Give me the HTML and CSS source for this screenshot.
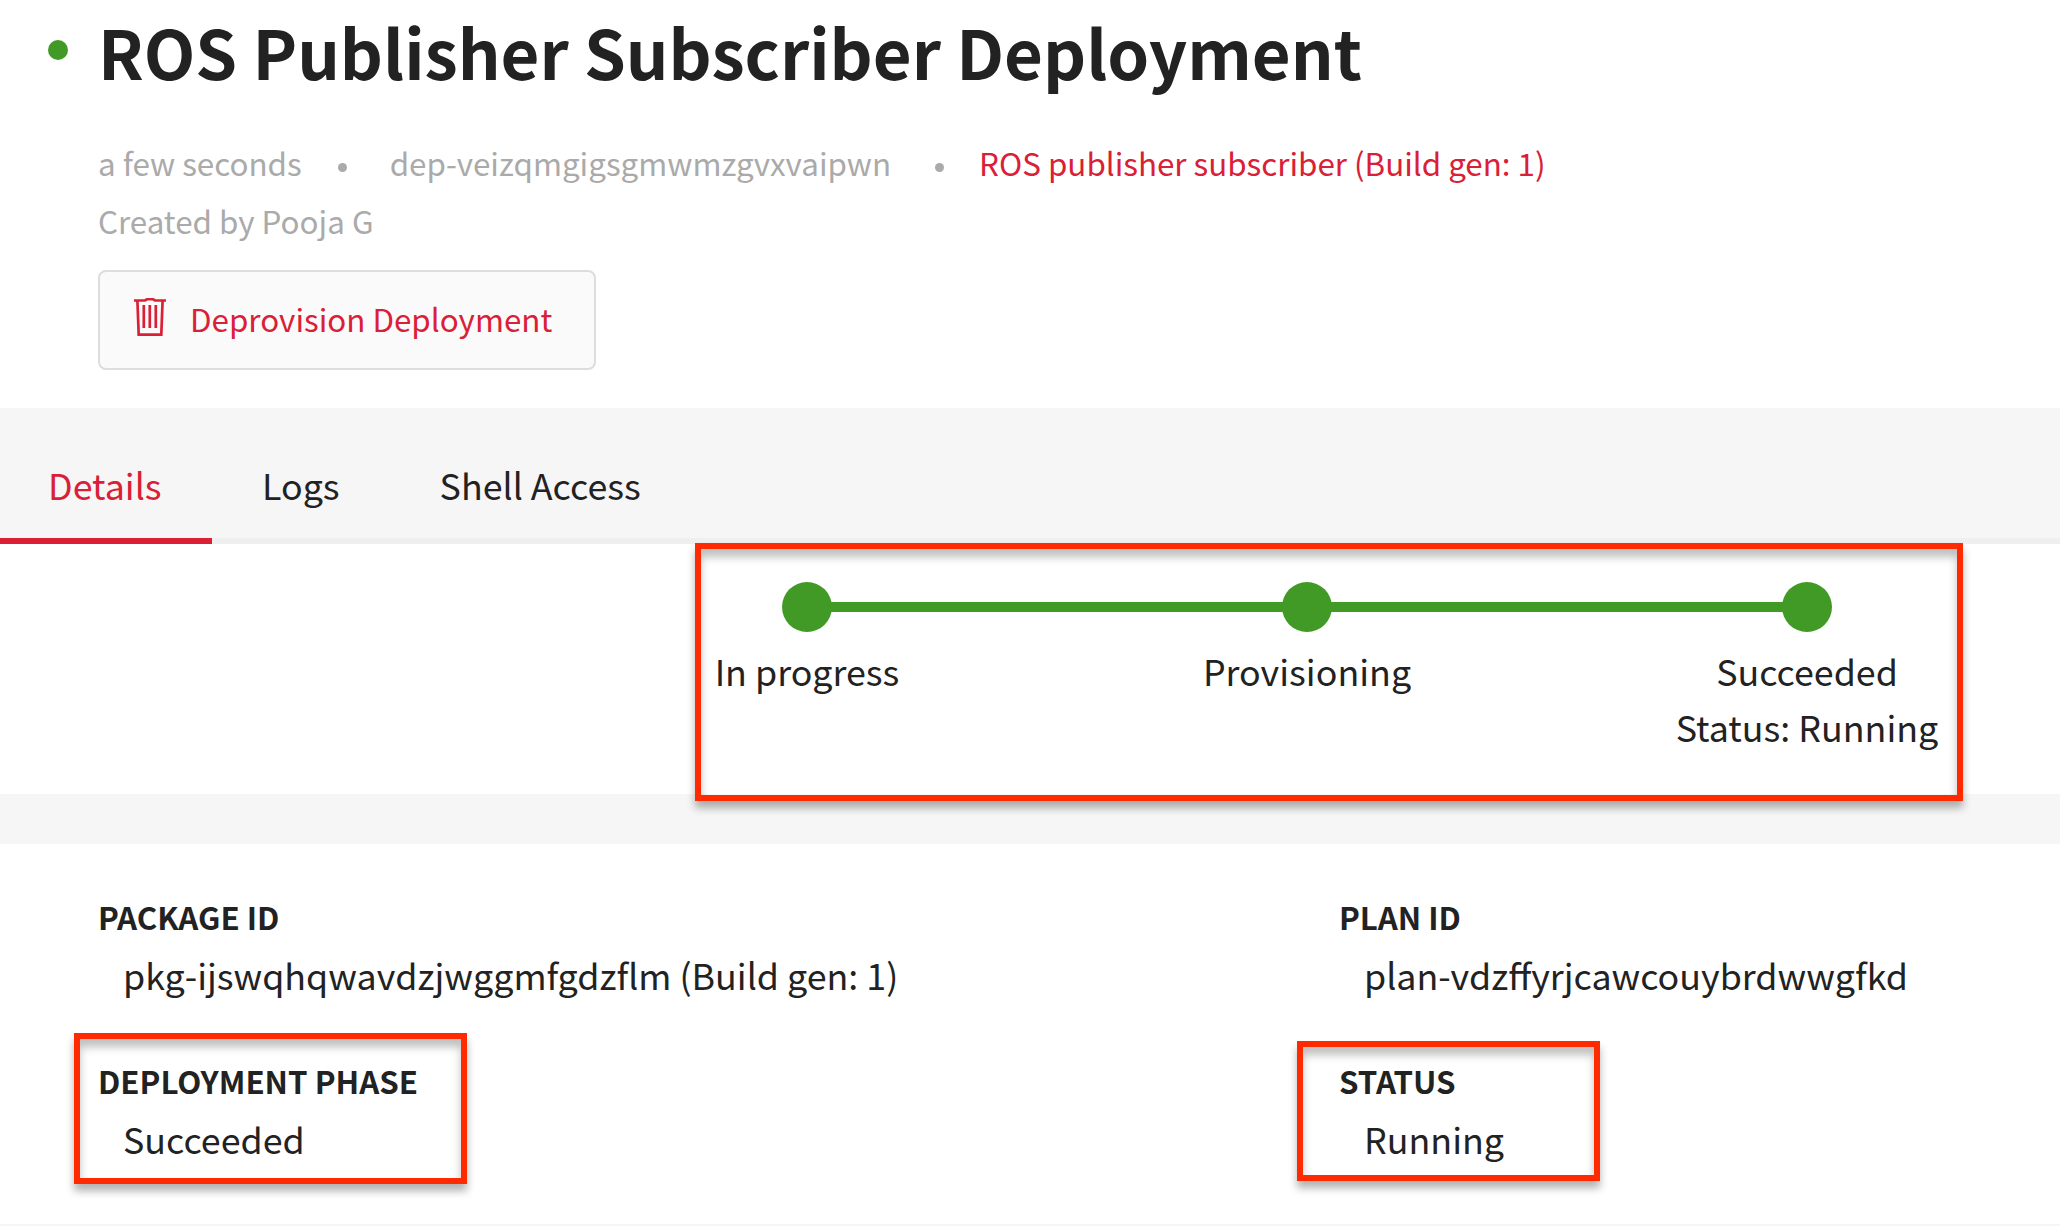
FILE: index.html
```html
<!DOCTYPE html>
<html lang="en">
<head>
<meta charset="utf-8">
<title>ROS Publisher Subscriber Deployment</title>
<link rel="stylesheet" href="styles.css">
</head>
<body>
<header class="head">
  <div class="title-row"><span class="status-dot"></span><h1 class="title"><span>ROS Publisher Subscriber Deployment</span></h1></div>
  <div class="meta"><span class="age">a few seconds</span><i class="sep"></i><span class="dep">dep-veizqmgigsgmwmzgvxvaipwn</span><i class="sep sep-wide"></i><a class="link">ROS publisher subscriber (Build gen: 1)</a></div>
  <div class="author"><span>Created by Pooja G</span></div>
  <button class="button">
    <svg class="trash" viewBox="0 0 32 39" width="32" height="39" fill="none" stroke="currentColor" stroke-width="2.7"><path d="M0 2.500H11Q12.500 1.200 14 1.200H18Q19.500 1.200 21 2.500H32M3.400 2.500L4.700 36.600H27.300L28.600 2.500M9.800 7V30M15.800 7V30M21.800 7V30"/></svg>
    <span class="button-label">Deprovision Deployment</span>
  </button>
</header>
<nav class="tabs"><a class="tab active"><span>Details</span></a><a class="tab"><span>Logs</span></a><a class="tab"><span>Shell Access</span></a></nav>
<section class="progress">
  <ol class="steps">
    <li class="step"><b class="node"></b><span>In progress</span></li>
    <li class="step"><b class="node"></b><span>Provisioning</span></li>
    <li class="step"><b class="node"></b><span>Succeeded</span><span>Status: Running</span></li>
  </ol>
  <div class="mark mark-steps"></div>
</section>
<section class="details">
  <dl class="field"><dt><span>PACKAGE ID</span></dt><dd><span>pkg-ijswqhqwavdzjwggmfgdzflm (Build gen: 1)</span></dd></dl>
  <dl class="field"><dt><span>PLAN ID</span></dt><dd><span>plan-vdzffyrjcawcouybrdwwgfkd</span></dd></dl>
  <dl class="field"><dt><span>DEPLOYMENT PHASE</span></dt><dd><span>Succeeded</span></dd><div class="mark mark-phase"></div></dl>
  <dl class="field"><dt><span>STATUS</span></dt><dd><span>Running</span></dd><div class="mark mark-status"></div></dl>
</section>
</body>
</html>
```
FILE: styles.css
```css
* { box-sizing: border-box; margin: 0; padding: 0; }
body { width: 2060px; height: 1226px; overflow: hidden; background: #fff; color: #222; font-family: "Noto Sans CJK SC", "Noto Sans", sans-serif; font-size: 35.8px; }
.head { height: 408px; padding-left: 48px; }
.title-row { display: flex; height: 110px; }
.status-dot { width: 20px; height: 20px; border-radius: 50%; background: #429a26; margin-top: 40px; }
.title { margin-left: 30px; font-size: 67.05px; font-weight: 700; line-height: 102px; white-space: nowrap; }
.meta { display: flex; align-items: center; margin-left: 50px; margin-top: 24px; height: 58px; font-size: 31.35px; line-height: 58px; color: #aaa; }
.sep { width: 9px; height: 9px; border-radius: 50%; background: #aaa; margin: 9px 43px 0 36px; }
.sep-wide { margin: 9px 35px 0 44px; }
.link { color: #da2036; }
.author { margin-left: 50px; height: 58px; font-size: 31.35px; line-height: 58px; color: #aaa; }
.button { display: flex; align-items: center; width: 498px; height: 100px; margin: 20px 0 0 50px; padding-left: 34px; gap: 24px; border: 2px solid #ddd; border-radius: 8px; background: #fafafa; color: #da2036; font: 31.35px/58px "Noto Sans CJK SC", sans-serif; }
.trash { margin-bottom: 5px; }
.button-label { margin-bottom: 3px; }
.tabs { display: flex; height: 136px; background: #f6f6f6; border-bottom: 6px solid #efefef; }
.tab { height: 136px; padding: 39px 50px 0; line-height: 74px; }
.active { color: #da2036; border-bottom: 6px solid #da2036; width: 212px; padding-left: 48px; }
.progress { position: relative; height: 250px; padding-left: 557px; }
.steps { display: flex; list-style: none; padding-top: 38px; }
.step { display: flex; flex-direction: column; align-items: center; width: 500px; line-height: 56px; position: relative; }
.node { width: 50px; height: 50px; border-radius: 50%; background: #429a26; margin-bottom: 10px; }
.step + .step::before { content: ""; position: absolute; top: 20px; left: -250px; width: 500px; height: 10px; background: #429a26; }
.mark { position: absolute; border: 6px solid #ff2a00; box-shadow: 0 7px 8px rgba(0,0,0,.3), inset 0 8px 8px rgba(0,0,0,.25); }
.mark-steps { left: 695px; top: -1px; width: 1268px; height: 258px; }
.details { display: grid; grid-template-columns: 1241px 1fr; grid-auto-rows: 164px; height: 432px; padding: 44px 0 0 98px; border-top: 50px solid #f6f6f6; border-bottom: 2px solid #f6f6f6; }
.field { position: relative; }
dt { font-size: 31.25px; font-weight: 700; line-height: 58px; }
dd { padding-left: 25px; line-height: 56px; }
.mark-phase { left: -24px; top: -19px; width: 393px; height: 151px; }
.mark-status { left: -42px; top: -11px; width: 303px; height: 140px; }
```
